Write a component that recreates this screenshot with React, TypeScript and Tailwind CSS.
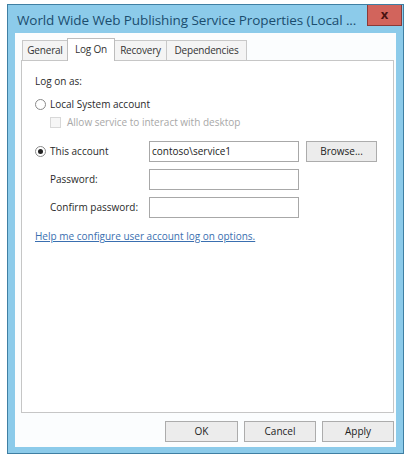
import { ReactNode } from "react";

const font = { fontFamily: '"Open Sans", "Noto Sans", sans-serif' };

const Radio = ({ checked }: { checked?: boolean }) => (
  <span className="w-[11px] h-[11px] rounded-full border border-[#8a8a8a] bg-white flex items-center justify-center">
    {checked && <span className="w-[5px] h-[5px] rounded-full bg-[#222]" />}
  </span>
);

const Field = ({ value }: { value?: string }) => (
  <div className="w-[150px] h-[21px] border border-[#a8a8a8] bg-white flex items-center px-[2px] text-[10px] text-[#222]">
    {value}
  </div>
);

const Btn = ({ children, w }: { children: ReactNode; w: string }) => (
  <div
    className={`${w} h-[21px] border border-[#acacac] bg-[#ececec] flex items-center justify-center text-[10px] text-[#222]`}
  >
    {children}
  </div>
);

const tabs = [
  { label: "General", w: "w-[46px]" },
  { label: "Log On", w: "w-[48px]" },
  { label: "Recovery", w: "w-[53px]" },
  { label: "Dependencies", w: "w-[81px]" },
];

const App = () => {
  return (
    <div className="w-[417px] h-[463px] bg-white pt-[4px] pl-[7px]" style={font}>
      <div className="w-[397px] h-[450px] border border-[#3f7fa3] bg-[#8ccbea] flex flex-col">
        {/* title bar */}
        <div className="h-[28px] flex items-start justify-between">
          <div className="pl-[9px] pt-[5px] text-[13.5px] text-[#1b4d6e] tracking-[-0.1px] whitespace-nowrap">
            World Wide Web Publishing Service Properties (Local ...
          </div>
          <div className="w-[35px] h-[21px] mr-[1px] border border-[#8a3a38] border-t-0 bg-[#d2645c] flex items-center justify-center text-[13px] font-bold text-[#4a1212]">
            x
          </div>
        </div>

        {/* body */}
        <div className="flex-1 mx-[7px] mb-[6px] bg-[#fbfdfe] flex flex-col pt-[5px]">
          {/* tabs */}
          <div className="flex items-end ml-[7px] h-[22px] text-[10px] text-[#333] tracking-[-0.2px]">
            {tabs.map((t) =>
              t.label === "Log On" ? (
                <div
                  key={t.label}
                  className={`${t.w} h-[23px] border border-[#bdbdbd] border-b-0 bg-white -mb-[1px] -ml-[1px] relative z-10 flex justify-center items-start pt-[3px]`}
                >
                  {t.label}
                </div>
              ) : (
                <div
                  key={t.label}
                  className={`${t.w} h-[20px] border border-[#c8c8c8] border-b-0 -ml-[1px] first:ml-0 bg-[#f4f4f4] flex justify-center items-center`}
                >
                  {t.label}
                </div>
              )
            )}
          </div>

          {/* panel */}
          <div className="ml-[6px] w-[373px] h-[353px] border border-[#c6c6c6] bg-white pl-[13px] pt-[13px] text-[10px] text-[#2a2a2a]">
            <div>Log on as:</div>

            <div className="flex items-center gap-[4px] mt-[8px]">
              <Radio />
              <span>Local System account</span>
            </div>
            <div className="flex items-center gap-[6px] mt-[3px] ml-[15px] text-[#a8a8a8]">
              <span className="w-[11px] h-[11px] border border-[#d8d8d8] bg-[#f6f6f6]" />
              <span>Allow service to interact with desktop</span>
            </div>

            <div className="flex items-center mt-[11px]">
              <div className="w-[114px] flex items-center gap-[4px]">
                <Radio checked />
                <span>This account</span>
              </div>
              <Field value="contoso\service1" />
              <div className="ml-[7px]">
                <Btn w="w-[71px]">Browse...</Btn>
              </div>
            </div>

            <div className="flex items-center mt-[7px]">
              <div className="w-[114px] pl-[15px]">Password:</div>
              <Field />
            </div>
            <div className="flex items-center mt-[7px]">
              <div className="w-[114px] pl-[15px]">Confirm password:</div>
              <Field />
            </div>

            <div className="mt-[11px] text-[#3a6fb0] underline">
              Help me configure user account log on options.
            </div>
          </div>

          {/* buttons */}
          <div className="flex justify-end gap-[6px] mt-[8px] mr-[2px]">
            <Btn w="w-[73px]">OK</Btn>
            <Btn w="w-[72px]">Cancel</Btn>
            <Btn w="w-[72px]">Apply</Btn>
          </div>
        </div>
      </div>
    </div>
  );
};

export default App;
